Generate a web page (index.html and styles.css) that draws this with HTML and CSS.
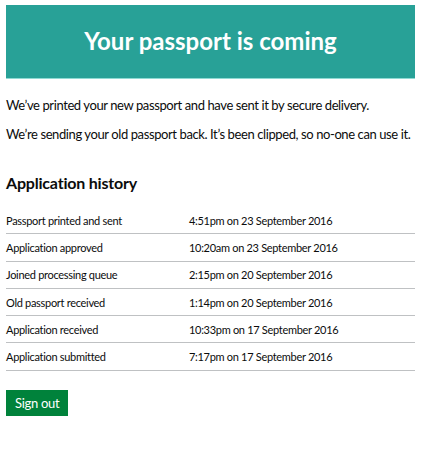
FILE: index.html
```html
<!DOCTYPE html>
<html lang="en">
<head>
<meta charset="utf-8">
<title>Your passport is coming</title>
<link rel="stylesheet" href="styles.css">
</head>
<body>
<main class="page">
  <div class="panel">
    <h1 class="panel-title">Your passport is coming</h1>
  </div>
  <p class="body-text">We’ve printed your new passport and have sent it by secure delivery.</p>
  <p class="body-text">We’re sending your old passport back. It’s been clipped, so no-one can use it.</p>
  <h2 class="heading">Application history</h2>
  <table class="history">
    <tbody>
      <tr><td>Passport printed and sent</td><td>4:51pm on 23 September 2016</td></tr>
      <tr><td>Application approved</td><td>10:20am on 23 September 2016</td></tr>
      <tr><td>Joined processing queue</td><td>2:15pm on 20 September 2016</td></tr>
      <tr><td>Old passport received</td><td>1:14pm on 20 September 2016</td></tr>
      <tr><td>Application received</td><td>10:33pm on 17 September 2016</td></tr>
      <tr><td>Application submitted</td><td>7:17pm on 17 September 2016</td></tr>
    </tbody>
  </table>
  <button class="button" type="button">Sign out</button>
</main>
</body>
</html>
```

FILE: styles.css
```css
html, body {
  margin: 0;
  padding: 0;
  background: #ffffff;
}
body {
  font-family: Lato, "Liberation Sans", Arial, sans-serif;
  color: #0b0c0c;
}
.page {
  padding: 5px 9px 0 6px;
  display: flex;
  flex-direction: column;
  align-items: flex-start;
}
.panel {
  align-self: stretch;
  background: #28a197;
  border-bottom: 1px solid #8fdad3;
  height: 73px;
  display: flex;
  align-items: center;
  justify-content: center;
}
.panel-title {
  margin: 0 0 2px;
  color: #ffffff;
  font-size: 24px;
  font-weight: 700;
}
.body-text {
  margin: 0;
  font-size: 13px;
  line-height: 19px;
  letter-spacing: -0.4px;
}
.body-text:first-of-type {
  margin-top: 17px;
}
.body-text + .body-text {
  margin-top: 10px;
}
.heading {
  margin: 28px 0 0;
  font-size: 16px;
  line-height: 22px;
  font-weight: 700;
  letter-spacing: -0.2px;
}
.history {
  align-self: stretch;
  margin-top: 13px;
  border-collapse: collapse;
  font-size: 11px;
  letter-spacing: -0.3px;
}
.history td {
  padding: 0;
  height: 26.3px;
  border-bottom: 1px solid #bfc1c3;
  vertical-align: middle;
}
.history td:first-child {
  width: 183px;
}
.button {
  margin-top: 19px;
  background: #00823b;
  color: #ffffff;
  border: 0;
  box-shadow: 0 2px 0 #003618;
  font-family: inherit;
  font-size: 13px;
  letter-spacing: -0.3px;
  line-height: 18px;
  padding: 4px 9px;
  height: 26px;
  cursor: pointer;
}
```
